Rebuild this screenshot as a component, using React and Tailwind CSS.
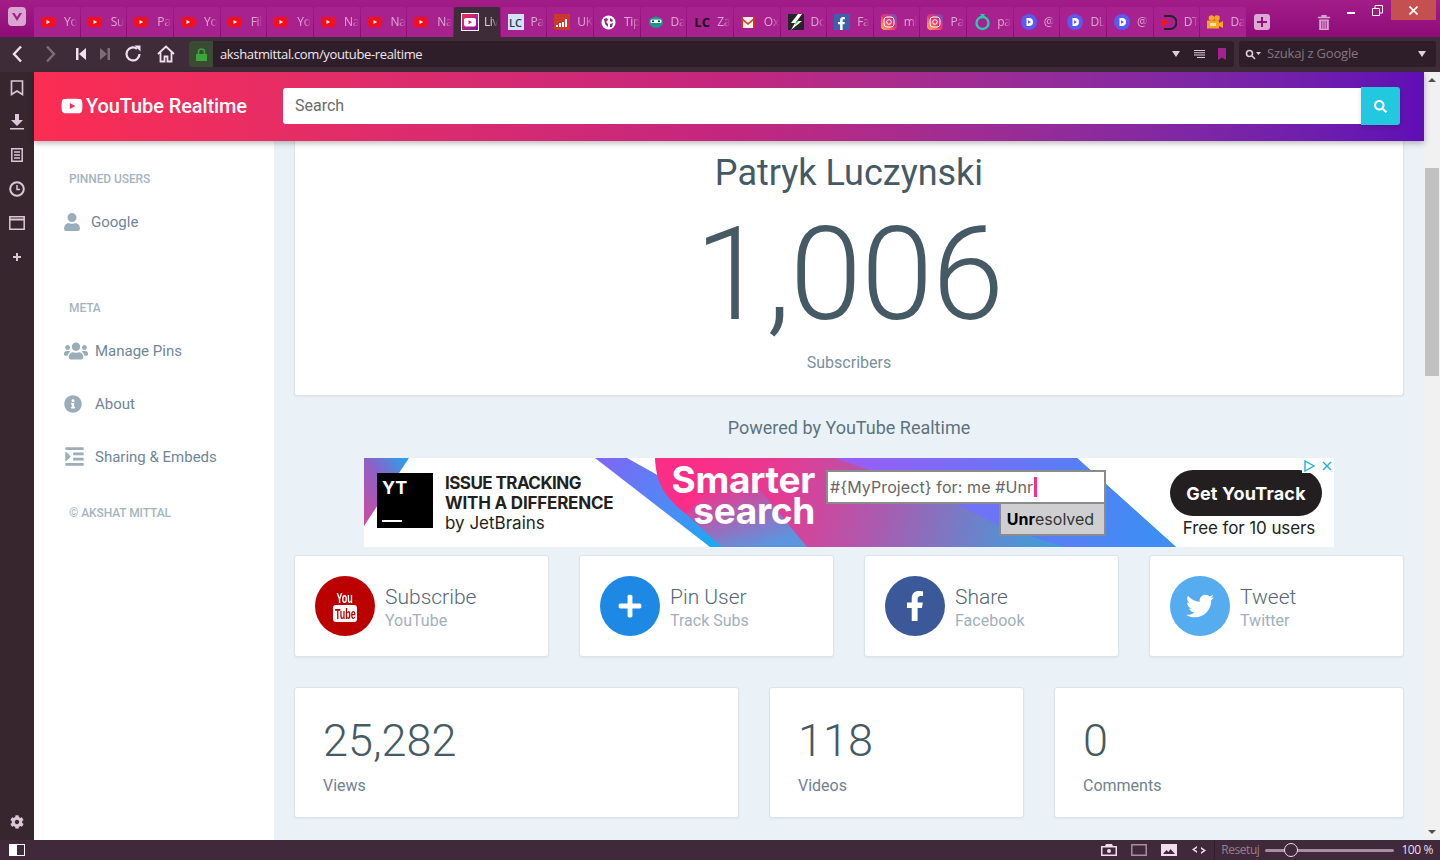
import {
  FaCog,
  FaFacebookF,
  FaIndent,
  FaInfoCircle,
  FaPlus,
  FaSearch,
  FaTwitter,
  FaUser,
  FaUsers,
  FaYoutube,
} from "react-icons/fa";

const tabs = [
  { icon: "yt", label: "Yo" },
  { icon: "yt", label: "Su" },
  { icon: "yt", label: "Pa" },
  { icon: "yt", label: "Yo" },
  { icon: "yt", label: "Fil" },
  { icon: "yt", label: "Yo" },
  { icon: "yt", label: "Na" },
  { icon: "yt", label: "Na" },
  { icon: "yt", label: "Na" },
  { icon: "live", label: "Liv", active: true },
  { icon: "lc", label: "Pa" },
  { icon: "uk", label: "UK" },
  { icon: "globe", label: "Tip" },
  { icon: "owl", label: "Da" },
  { icon: "lcdark", label: "Za" },
  { icon: "gmail", label: "Ox" },
  { icon: "bolt", label: "Dc" },
  { icon: "fb", label: "Fa" },
  { icon: "ig", label: "ml" },
  { icon: "ig", label: "Pa" },
  { icon: "ring", label: "pa" },
  { icon: "d", label: "@" },
  { icon: "d", label: "DL" },
  { icon: "d", label: "@" },
  { icon: "dt", label: "DT" },
  { icon: "cam", label: "Da" },
];

function TabIcon({ kind }) {
  if (kind === "yt") {
    return (
      <svg width="14" height="10" viewBox="0 0 14 10" className="shrink-0">
        <rect width="14" height="10" rx="2.5" fill="#f50f1a" />
        <path d="M5.5 3l3.6 2-3.6 2z" fill="#fff" />
      </svg>
    );
  }
  if (kind === "live") {
    return (
      <svg width="18" height="18" viewBox="0 0 18 18" className="shrink-0">
        <defs>
          <linearGradient id="liveGrad" x1="0" y1="0" x2="1" y2="1">
            <stop offset="0" stopColor="#f92f55" />
            <stop offset="1" stopColor="#7a10a8" />
          </linearGradient>
        </defs>
        <rect x="0.5" y="0.5" width="17" height="17" fill="url(#liveGrad)" stroke="#fff" />
        <rect x="3" y="5" width="12" height="8.5" rx="2" fill="#fff" />
        <path d="M7.5 7.2l3.5 2-3.5 2z" fill="#d0245f" />
      </svg>
    );
  }
  if (kind === "lc" || kind === "lcdark") {
    return (
      <span
        className={`flex h-4 w-4 shrink-0 items-center justify-center text-[11px] leading-none ${
          kind === "lc" ? "bg-[#cfe4f7] font-semibold text-[#2c3a4a]" : "text-[13px] font-bold text-[#1a1020]"
        }`}
      >
        LC
      </span>
    );
  }
  if (kind === "uk") {
    return (
      <svg width="16" height="16" viewBox="0 0 16 16" className="shrink-0">
        <rect width="16" height="16" fill="#c9392c" />
        <path d="M2 11h2v2H2zM5 9h2v4H5zM8 8h2v5H8zM11 5h2v8h-2z" fill="#fff" />
      </svg>
    );
  }
  if (kind === "globe") {
    return (
      <svg width="15" height="15" viewBox="0 0 15 15" className="shrink-0">
        <circle cx="7.5" cy="7.5" r="7" fill="#fff" />
        <path d="M3 4l3-1 1 2-2 2 2 2v3L4 9zM9 3l3 2-1 2-2-1zM9 9l3-1-1 4-2 0z" fill="#8c2a92" />
      </svg>
    );
  }
  if (kind === "owl") {
    return (
      <svg width="16" height="14" viewBox="0 0 16 14" className="shrink-0">
        <path d="M2 4q6-5 12 0l1 5q-7 8-14 0z" fill="#159a8a" />
        <rect x="2.5" y="4.5" width="11" height="3.5" rx="1" fill="#e8f4f0" />
        <circle cx="5" cy="6.2" r="1" fill="#1a2a30" />
        <circle cx="11" cy="6.2" r="1" fill="#1a2a30" />
      </svg>
    );
  }
  if (kind === "gmail") {
    return (
      <svg width="14" height="11" viewBox="0 0 14 11" className="shrink-0">
        <rect width="14" height="11" fill="#f2efe9" />
        <path d="M0 0l7 6 7-6v2L7 8 0 2z" fill="#d8392b" />
        <path d="M0 0h2v11H0zM12 0h2v11h-2z" fill="#c9352a" />
      </svg>
    );
  }
  if (kind === "bolt") {
    return (
      <svg width="16" height="16" viewBox="0 0 16 16" className="shrink-0">
        <rect width="16" height="16" fill="#26242a" />
        <path d="M10 0L3 9h4l-4 7 11-9H9l5-7z" fill="#fff" />
        <path d="M8 7l3 0-4 4z" fill="#4fc04a" />
      </svg>
    );
  }
  if (kind === "fb") {
    return (
      <span className="flex h-4 w-4 shrink-0 items-end justify-end bg-[#3b60ac] pr-[2px] text-white">
        <FaFacebookF size={13} />
      </span>
    );
  }
  if (kind === "ig") {
    return (
      <svg width="16" height="16" viewBox="0 0 16 16" className="shrink-0">
        <defs>
          <linearGradient id="igGrad" x1="0" y1="1" x2="1" y2="0">
            <stop offset="0" stopColor="#fdc050" />
            <stop offset="0.5" stopColor="#e8336c" />
            <stop offset="1" stopColor="#6a4fc8" />
          </linearGradient>
        </defs>
        <rect width="16" height="16" rx="4" fill="url(#igGrad)" />
        <rect x="3" y="3" width="10" height="10" rx="3" fill="none" stroke="#fff" />
        <circle cx="8" cy="8" r="2.3" fill="none" stroke="#fff" />
      </svg>
    );
  }
  if (kind === "ring") {
    return (
      <svg width="17" height="17" viewBox="0 0 17 17" className="shrink-0">
        <path d="M6 0h5L9 4z" fill="#1fd0a8" />
        <circle cx="8.5" cy="9" r="6" fill="none" stroke="#1fd0a8" strokeWidth="2.4" />
      </svg>
    );
  }
  if (kind === "d") {
    return (
      <svg width="16" height="16" viewBox="0 0 16 16" className="shrink-0">
        <circle cx="8" cy="8" r="8" fill="#5a5af0" />
        <path d="M5.5 4H8a4 4 0 0 1 0 8H5.5zM7 6.2v3.6L10 8z" fill="#fff" fillRule="evenodd" />
      </svg>
    );
  }
  if (kind === "dt") {
    return (
      <svg width="16" height="15" viewBox="0 0 16 15" className="shrink-0">
        <path d="M3 1h6a6.5 6.5 0 0 1 0 13H3" fill="none" stroke="#25202a" strokeWidth="2" />
        <path d="M0 3l9 4.5L0 12z" fill="#f0141e" />
      </svg>
    );
  }
  return (
    <svg width="16" height="14" viewBox="0 0 16 14" className="shrink-0">
      <circle cx="4.5" cy="3" r="2.8" fill="#f5a71e" />
      <circle cx="10" cy="3" r="2.8" fill="#f5a71e" />
      <rect y="5.5" width="12" height="8" fill="#f5a71e" />
      <path d="M12 8l4-2v7l-4-2z" fill="#f5a71e" />
      <rect x="3" y="8" width="6" height="3" fill="#fbe3a8" />
    </svg>
  );
}

function Tab({ tab }) {
  return (
    <div
      className={`flex h-[30px] w-[45.67px] shrink-0 items-center overflow-hidden rounded-t-[2px] pl-[7px] ${
        tab.active ? "bg-[#3e2d39]" : "bg-[#a8228f]"
      }`}
    >
      <span className="flex w-[23px] shrink-0 items-center">
        <TabIcon kind={tab.icon} />
      </span>
      <span
        className={`whitespace-nowrap text-[12px] tracking-[-0.3px] [mask-image:linear-gradient(to_right,black_50%,transparent)] ${
          tab.active ? "text-white/80" : "text-white/60"
        }`}
      >
        {tab.label}
      </span>
    </div>
  );
}

function TabBar() {
  return (
    <div className="flex h-[37px] shrink-0 bg-linear-to-b from-[#a31d89] to-[#8e0a77] font-['Open_Sans',sans-serif]">
      <div className="flex w-[34px] shrink-0 justify-center pt-[7px]">
        <svg width="18" height="19" viewBox="0 0 18 19">
          <rect width="18" height="19" rx="4" fill="#d9a6d2" />
          <path d="M4 6l5 8 5-8-2.5 0L9 10 6.500 6z" fill="#a31d89" />
        </svg>
      </div>
      <div className="flex items-end gap-px">
        {tabs.map((tab, i) => (
          <Tab key={i} tab={tab} />
        ))}
      </div>
      <div className="ml-[8px] flex items-start pt-[14px]">
        <svg width="16" height="16" viewBox="0 0 16 16">
          <rect width="16" height="16" rx="3" fill="#dca9d4" />
          <path d="M7 3h2v4h4v2H9v4H7V9H3V7h4z" fill="#93107b" />
        </svg>
      </div>
      <div className="ml-[47px] pt-[14px]">
        <svg width="14" height="17" viewBox="0 0 16 17" fill="#d9a6d2">
          <path d="M1 2h4V0h6v2h4v1.500H1zM2.500 5h11v12h-11zM5 6.500v9h1v-9zM7.500 6.500v9h1v-9zM10 6.500v9h1v-9z" fillRule="evenodd" />
        </svg>
      </div>
      <div className="ml-auto mr-[4px] flex h-5 items-center">
        <svg width="8" height="2" className="mr-[17px] mt-[6px]">
          <rect width="8" height="2" fill="#fff" />
        </svg>
        <svg width="11" height="11" viewBox="0 0 11 11" className="mr-[8px]" fill="none" stroke="#fff">
          <path d="M0.500 3.500h7v7h-7zM3 3V0.500h7.500V8H8" />
        </svg>
        <div className="flex h-5 w-[45px] items-center justify-center bg-[#c4504f]">
          <svg width="9" height="9" viewBox="0 0 9 9" stroke="#fff" strokeWidth="1.600">
            <path d="M0.500 0.500l8 8M8.500 0.500l-8 8" />
          </svg>
        </div>
      </div>
    </div>
  );
}

function AddressBar() {
  return (
    <div className="flex h-[35px] shrink-0 items-center bg-[#3e2d39] pb-px font-['Open_Sans',sans-serif]">
      <div className="flex w-[189px] shrink-0 items-center text-[#f3dff0]">
        <svg width="12" height="18" viewBox="0 0 12 18" className="ml-[11px]" fill="none" stroke="currentColor" strokeWidth="2.400">
          <path d="M10 1.500L3 9l7 7.500" />
        </svg>
        <svg width="12" height="18" viewBox="0 0 12 18" className="ml-[22px] opacity-35" fill="none" stroke="currentColor" strokeWidth="2.400">
          <path d="M2 1.500L9 9l-7 7.500" />
        </svg>
        <svg width="10" height="12" viewBox="0 0 10 12" className="ml-[19px]" fill="currentColor">
          <path d="M0 0h2.500v12H0zM10 0v12L3 6z" />
        </svg>
        <svg width="10" height="12" viewBox="0 0 10 12" className="ml-[14px] opacity-35" fill="currentColor">
          <path d="M7.500 0H10v12H7.500zM0 0v12l7-6z" />
        </svg>
        <svg width="18" height="18" viewBox="0 0 18 18" className="ml-[14px]" fill="none" stroke="currentColor" strokeWidth="2.200">
          <path d="M15.500 9A6.500 6.500 0 1 1 13 3.800" />
          <path d="M10.500 0.500h6v6z" fill="currentColor" stroke="none" />
        </svg>
        <svg width="18" height="18" viewBox="0 0 18 18" className="ml-[15px]" fill="none" stroke="currentColor" strokeWidth="1.800">
          <path d="M1 9l8-7.500L17 9M3.500 7.500V16.500h4v-5h3v5h4V7.500" />
        </svg>
      </div>
      <div className="flex h-[26px] w-[1045px] items-center rounded-[3px] bg-[#2e1e29]">
        <div className="flex h-full w-[24px] items-center justify-center rounded-l-[3px] bg-[#3a4a35]">
          <svg width="11" height="13" viewBox="0 0 11 13">
            <path d="M2.500 6V4a3 3 0 0 1 6 0v2" fill="none" stroke="#3ca53c" strokeWidth="1.500" />
            <rect y="6" width="11" height="7" fill="#3ca53c" />
          </svg>
        </div>
        <span className="ml-[7px] pt-px text-[13px] tracking-[-0.36px] text-[#efe6ee]">akshatmittal.com/youtube-realtime</span>
        <div className="ml-auto flex items-center text-[#dcd0da]">
          <svg width="8" height="6" viewBox="0 0 8 6" fill="currentColor">
            <path d="M0 0h8L4 6z" />
          </svg>
          <svg width="11" height="8" viewBox="0 0 11 8" fill="currentColor" className="ml-[14px]">
            <path d="M0 0h11v1H0zM0 2.300h11v1H0zM0 4.600h11v1H0zM3 6.900h8v1H3z" />
          </svg>
          <svg width="8" height="12" viewBox="0 0 8 12" fill="#a3228f" className="ml-[13px] mr-[8px]">
            <path d="M0 0h8v12L4 9.500 0 12z" />
          </svg>
        </div>
      </div>
      <div className="ml-[5px] flex h-[26px] w-[197px] items-center rounded-[3px] bg-[#2e1e29] pl-[6px] pr-[10px]">
        <svg width="16" height="11" viewBox="0 0 16 11" fill="none" stroke="#dcd0da" strokeWidth="1.600">
          <circle cx="4.500" cy="4.500" r="3" />
          <path d="M7 7l3 3" />
          <path d="M11 3h5l-2.500 3z" fill="#dcd0da" stroke="none" />
        </svg>
        <span className="ml-[6px] text-[13px] tracking-[-0.2px] text-[#85757f]">Szukaj z Google</span>
        <svg width="8" height="6" viewBox="0 0 8 6" fill="#dcd0da" className="ml-auto">
          <path d="M0 0h8L4 6z" />
        </svg>
      </div>
    </div>
  );
}

function SidePanel() {
  return (
    <div className="flex w-[34px] shrink-0 flex-col items-center bg-[#38262f] pt-[8px] text-[#dcc6d8]">
      <svg width="14" height="16" viewBox="0 0 14 16" fill="none" stroke="currentColor" strokeWidth="1.600">
        <path d="M1.500 1h11v13.500L7 11l-5.500 3.500z" />
      </svg>
      <svg width="14" height="16" viewBox="0 0 14 16" fill="currentColor" className="mt-[18px]">
        <path d="M5 0h4v6h4L7 12 1 6h4zM0 14h14v1.500H0z" />
      </svg>
      <svg width="12" height="14" viewBox="0 0 12 14" fill="none" stroke="currentColor" strokeWidth="1.500" className="mt-[18px]">
        <path d="M0.800 0.800h10.400v12.400H0.800zM3 4h6M3 7h6M3 10h6" />
      </svg>
      <svg width="16" height="16" viewBox="0 0 16 16" fill="none" stroke="currentColor" strokeWidth="2" className="mt-[19px]">
        <circle cx="8" cy="8" r="6.800" />
        <path d="M8 4v4.500h3" strokeWidth="1.500" />
      </svg>
      <svg width="16" height="14" viewBox="0 0 16 14" fill="none" stroke="currentColor" strokeWidth="1.500" className="mt-[19px]">
        <path d="M0.800 0.800h14.400v12.400H0.800z" />
        <path d="M0.800 3.500h14.400" strokeWidth="2" />
      </svg>
      <svg width="8" height="8" viewBox="0 0 8 8" fill="currentColor" className="mt-[23px]">
        <path d="M3 0h2v3h3v2H5v3H3V5H0V3h3z" />
      </svg>
      <FaCog size={14} className="mt-auto mb-[11px]" />
    </div>
  );
}

function SideHeading({ children, className }) {
  return <p className={`pl-[35px] text-[12px] font-medium leading-4 tracking-[-0.1px] text-[#a4b5c0] ${className}`}>{children}</p>;
}

function SideRow({ icon, label, iconWidth }) {
  return (
    <div className="flex h-[53px] items-center pl-[30px] text-[15px] text-[#6f8698]">
      <span className={`flex shrink-0 justify-start text-[#9aadb9] ${iconWidth}`}>{icon}</span>
      {label}
    </div>
  );
}

function Sidebar() {
  return (
    <aside className="w-[240px] shrink-0 bg-white">
      <SideHeading className="mt-[30px]">PINNED USERS</SideHeading>
      <div className="mt-[9px]">
        <SideRow icon={<FaUser size={18} />} label="Google" iconWidth="w-[27px] -translate-x-px -translate-y-px" />
      </div>
      <SideHeading className="mt-[51px]">META</SideHeading>
      <div className="mt-[9px]">
        <SideRow icon={<FaUsers size={24} />} label="Manage Pins" iconWidth="w-[31px] -translate-y-px" />
        <SideRow icon={<FaInfoCircle size={18} />} label="About" iconWidth="w-[31px] -translate-y-px" />
        <SideRow icon={<FaIndent size={21} />} label="Sharing & Embeds" iconWidth="w-[31px] -translate-y-px" />
      </div>
      <SideHeading className="mt-[21px]">© AKSHAT MITTAL</SideHeading>
    </aside>
  );
}

function Banner() {
  return (
    <div className="relative mx-auto mt-[18px] h-[89px] w-[970px] overflow-hidden bg-white font-['Inter',sans-serif] text-[#231f20]">
      <svg width="970" height="89" viewBox="0 0 970 89" className="absolute inset-0">
        <defs>
          <linearGradient id="cornerGrad" x1="0" y1="1" x2="1" y2="0">
            <stop offset="0" stopColor="#d04a9c" />
            <stop offset="0.55" stopColor="#8a62c8" />
            <stop offset="1" stopColor="#20a8ee" />
          </linearGradient>
          <linearGradient id="stripeGrad" gradientUnits="userSpaceOnUse" x1="231" y1="0" x2="358" y2="89">
            <stop offset="0" stopColor="#8264f6" />
            <stop offset="0.6" stopColor="#4b8cf4" />
            <stop offset="1" stopColor="#14aef0" />
          </linearGradient>
          <linearGradient id="blobGrad" gradientUnits="userSpaceOnUse" x1="330" y1="10" x2="780" y2="120">
            <stop offset="0" stopColor="#fc2d87" />
            <stop offset="0.18" stopColor="#e63a92" />
            <stop offset="0.42" stopColor="#a85cb0" />
            <stop offset="0.72" stopColor="#4f94d6" />
            <stop offset="1" stopColor="#14aef0" />
          </linearGradient>
          <linearGradient id="bandGrad" gradientUnits="userSpaceOnUse" x1="380" y1="20" x2="400" y2="89">
            <stop offset="0" stopColor="#5a96e0" stopOpacity="0" />
            <stop offset="1" stopColor="#5a96e0" />
          </linearGradient>
          <linearGradient id="topGrad" gradientUnits="userSpaceOnUse" x1="480" y1="0" x2="780" y2="80">
            <stop offset="0" stopColor="#9a5cf6" />
            <stop offset="1" stopColor="#3f8cf4" />
          </linearGradient>
        </defs>
        <path d="M0 0h45L0 68z" fill="url(#cornerGrad)" />
        <path d="M231 0h32l34 19 61 70h-12z" fill="url(#stripeGrad)" />
        <path d="M291 0C292 30 305 42 322 56L358 89H812L713 0z" fill="url(#blobGrad)" />
        <path d="M373 3L443 89H358L322 56z" fill="url(#bandGrad)" />
        <path d="M470 0H713L812 89H700L640 70 560 30z" fill="url(#topGrad)" />
      </svg>
      <div className="relative flex h-full items-start">
        <div className="ml-[13px] mt-[15px] flex h-[55px] w-[56px] shrink-0 flex-col justify-between bg-black px-[5px] pb-[6px] pt-[5px] text-white">
          <span className="text-[18px] font-bold leading-5">YT</span>
          <span className="h-[2px] w-[20px] bg-white" />
        </div>
        <div className="ml-[12px] mt-[15px] w-[198px] shrink-0 text-[#231f20]">
          <p className="text-[17px] font-bold leading-5 tracking-[-0.55px]">ISSUE TRACKING</p>
          <p className="text-[17px] font-bold leading-5 tracking-[-0.2px]">WITH A DIFFERENCE</p>
          <p className="text-[17px] leading-[21px]">by JetBrains</p>
        </div>
        <div className="ml-[15px] mt-[6px] w-[157px] shrink-0 text-right text-[37px] font-bold leading-[32px] tracking-[-0.3px] text-white">
          <p>Smarter</p>
          <p className="-translate-y-px">search</p>
        </div>
        <div className="ml-[11px] mt-[12px] w-[280px] shrink-0">
          <div className="flex h-[34px] items-center border-2 border-[#8b8b8b] bg-white pl-[2px] text-[16px] tracking-[0.1px] text-[#666]">
            #{"{"}MyProject{"}"} for: me #Unr
            <span className="ml-px h-[20px] w-[3px] bg-[#fc2d87]" />
          </div>
          <div className="ml-auto flex h-[32px] w-[107px] items-center justify-center border-2 border-t-0 border-[#8b8b8b] bg-[#cfcfd1] pr-[4px] text-[16px] text-[#333]">
            <b className="text-black">Unr</b>esolved
          </div>
        </div>
        <div className="ml-[61px] mt-[12px] flex w-[158px] shrink-0 flex-col items-center">
          <div className="flex h-[46px] w-[152px] items-center justify-center rounded-full bg-[#231f20] text-[18px] font-bold tracking-[0.2px] text-white">
            Get YouTrack
          </div>
          <p className="ml-[6px] text-[17px] leading-6 tracking-[-0.1px]">Free for 10 users</p>
        </div>
      </div>
      <div className="absolute right-[2px] top-0 flex h-[15px] items-center gap-[7px] bg-white pl-[2px]">
        <svg width="11" height="12" viewBox="0 0 11 12" fill="none" stroke="#18b4d8" strokeWidth="1.400">
          <path d="M1 1l9 5-9 5z" />
        </svg>
        <svg width="10" height="10" viewBox="0 0 10 10" stroke="#18b4d8" strokeWidth="1.400">
          <path d="M1 1l8 8M9 1L1 9" />
        </svg>
      </div>
    </div>
  );
}

function YouTubeGlyph() {
  return (
    <span className="flex flex-col items-center font-['Liberation_Sans',sans-serif] font-bold leading-none">
      <span className="mb-px scale-x-[0.6] text-[15px] leading-[13px] text-white">You</span>
      <span className="flex h-[17px] w-[24px] items-center justify-center rounded-[3px] bg-white">
        <span className="scale-x-[0.6] text-[15px] text-[#bb0000]">Tube</span>
      </span>
    </span>
  );
}

const actions = [
  { title: "Subscribe", sub: "YouTube", color: "bg-[#bb0000]", icon: <YouTubeGlyph /> },
  { title: "Pin User", sub: "Track Subs", color: "bg-[#1e88e5]", icon: <FaPlus size={26} /> },
  { title: "Share", sub: "Facebook", color: "bg-[#3b5998]", icon: <FaFacebookF size={30} /> },
  { title: "Tweet", sub: "Twitter", color: "bg-[#55acee]", icon: <FaTwitter size={28} /> },
];

const stats = [
  { value: "25,282", label: "Views" },
  { value: "118", label: "Videos" },
  { value: "0", label: "Comments" },
];

const cardClass = "rounded-[3px] border border-[#dde4e8] bg-white shadow-[0_1px_2px_rgba(0,0,0,0.05)]";

function Main() {
  return (
    <main className="min-w-0 flex-1 overflow-hidden bg-[#ebf2f7] px-5">
      <section className={`${cardClass} h-[255px] rounded-t-none border-t-0 pt-[9px] text-center`}>
        <h1 className="mt-px text-[36px] font-normal leading-[44px] text-[#455a64]">Patryk Luczynski</h1>
        <p className="mt-[15px] text-[130px] font-light leading-[130px] tracking-[-1px] text-[#455a64]">1,006</p>
        <p className="mt-[11px] text-[16px] leading-6 text-[#78909c]">Subscribers</p>
      </section>

      <p className="mt-[20px] text-center text-[18px] leading-6 text-[#5c7280]">Powered by YouTube Realtime</p>

      <Banner />

      <div className="mt-[8px] grid grid-cols-4 gap-[30px]">
        {actions.map((item) => (
          <div key={item.title} className={`${cardClass} flex h-[102px] items-center pl-5`}>
            <span className={`flex h-[60px] w-[60px] shrink-0 items-center justify-center rounded-full text-white ${item.color}`}>
              {item.icon}
            </span>
            <div className="ml-[10px] mt-[2px]">
              <p className="text-[21px] font-light leading-[28px] text-[#54667a]">{item.title}</p>
              <p className="text-[16px] leading-[20px] text-[#a1b1bc]">{item.sub}</p>
            </div>
          </div>
        ))}
      </div>

      <div className="mt-[30px] grid grid-cols-[445px_255px_350px] gap-[30px]">
        {stats.map((item) => (
          <div key={item.label} className={`${cardClass} h-[131px] pl-7 pt-[25px]`}>
            <p className="text-[45px] font-light leading-[56px] text-[#455a64]">{item.value}</p>
            <p className="mt-[5px] text-[16px] leading-6 text-[#6f8290]">{item.label}</p>
          </div>
        ))}
      </div>
    </main>
  );
}

function Scrollbar() {
  return (
    <div className="flex w-4 shrink-0 flex-col items-center bg-[#f1f1f1]">
      <svg width="8" height="4" viewBox="0 0 8 4" className="mt-[6px]" fill="#505050">
        <path d="M0 4h8L4 0z" />
      </svg>
      <div className="mt-[86px] h-[208px] w-[14px] bg-[#c1c1c1]" />
      <svg width="8" height="4" viewBox="0 0 8 4" className="mb-[6px] mt-auto" fill="#505050">
        <path d="M0 0h8L4 4z" />
      </svg>
    </div>
  );
}

function StatusBar() {
  return (
    <div className="flex h-[20px] shrink-0 items-center bg-[#40293a] font-['Open_Sans',sans-serif] text-[#f0dcec]">
      <div className="ml-[9px] flex h-3 w-4 border border-white bg-white">
        <span className="w-[7px] bg-white" />
        <span className="flex-1 bg-[#40293a]" />
      </div>
      <svg width="16" height="12" viewBox="0 0 16 12" fill="currentColor" className="ml-auto">
        <path d="M0 2h4l1-2h6l1 2h4v10H0zM1.500 3.500v7h13v-7zM8 5a2 2 0 1 1 0 4 2 2 0 0 1 0-4z" fillRule="evenodd" />
      </svg>
      <svg width="16" height="12" viewBox="0 0 16 12" fill="none" stroke="#a78ea3" strokeWidth="1.500" className="ml-[14px]">
        <path d="M0.800 0.800h14.400v10.400H0.800z" />
      </svg>
      <svg width="16" height="12" viewBox="0 0 16 12" className="ml-[14px]">
        <rect width="16" height="12" fill="#f2dcee" />
        <path d="M2 10l3.500-4 2 2 2-3 4.500 5z" fill="#40293a" />
      </svg>
      <svg width="14" height="8" viewBox="0 0 14 8" fill="currentColor" className="ml-[15px]">
        <path d="M5 0v2L2.500 3.500 5 5v2L0 3.500zM9 1l5 3.500L9 8V6l2.500-1.500L9 3z" />
      </svg>
      <span className="ml-[8px] h-full w-px bg-[#2e1e29]" />
      <span className="ml-[6px] text-[12px] tracking-[-0.45px] text-[#95808f]">Resetuj</span>
      <div className="relative ml-[6px] flex h-[3px] w-[129px] items-center rounded-full bg-[#a78ea3]">
        <span className="absolute left-[19px] h-[14px] w-[14px] rounded-full border border-[#f0dcec] bg-[#40293a]" />
      </div>
      <span className="ml-[7px] mr-[7px] text-[12px] tracking-[-0.4px]">100 %</span>
    </div>
  );
}

export default function App() {
  return (
    <div className="flex h-[860px] w-[1440px] flex-col overflow-hidden bg-white font-['Roboto',sans-serif]">
      <TabBar />
      <AddressBar />
      <div className="flex min-h-0 flex-1">
        <SidePanel />
        <div className="flex min-w-0 flex-1 flex-col">
          <header className="relative z-10 flex h-[69px] shrink-0 items-center bg-linear-to-r from-[#fb2d52] via-[#c3267e] to-[#600db5] pb-px pl-[27px] pr-6 shadow-[0_2px_6px_rgba(0,0,0,0.3)]">
            <div className="flex w-[222px] shrink-0 items-center text-white">
              <FaYoutube size={22} />
              <span className="ml-[3px] text-[20px] font-medium tracking-[-0.1px]">YouTube Realtime</span>
            </div>
            <div className="flex h-9 flex-1 items-center rounded-l-[3px] bg-white pl-3 text-[16px] text-[#6b6b6b]">Search</div>
            <div className="flex h-[38px] w-[39px] shrink-0 items-center justify-center rounded-r-[3px] bg-[#22c8de] text-white shadow-[0_2px_4px_rgba(0,0,0,0.15)]">
              <FaSearch size={13} />
            </div>
          </header>
          <div className="flex min-h-0 flex-1">
            <Sidebar />
            <Main />
          </div>
        </div>
        <Scrollbar />
      </div>
      <StatusBar />
    </div>
  );
}
